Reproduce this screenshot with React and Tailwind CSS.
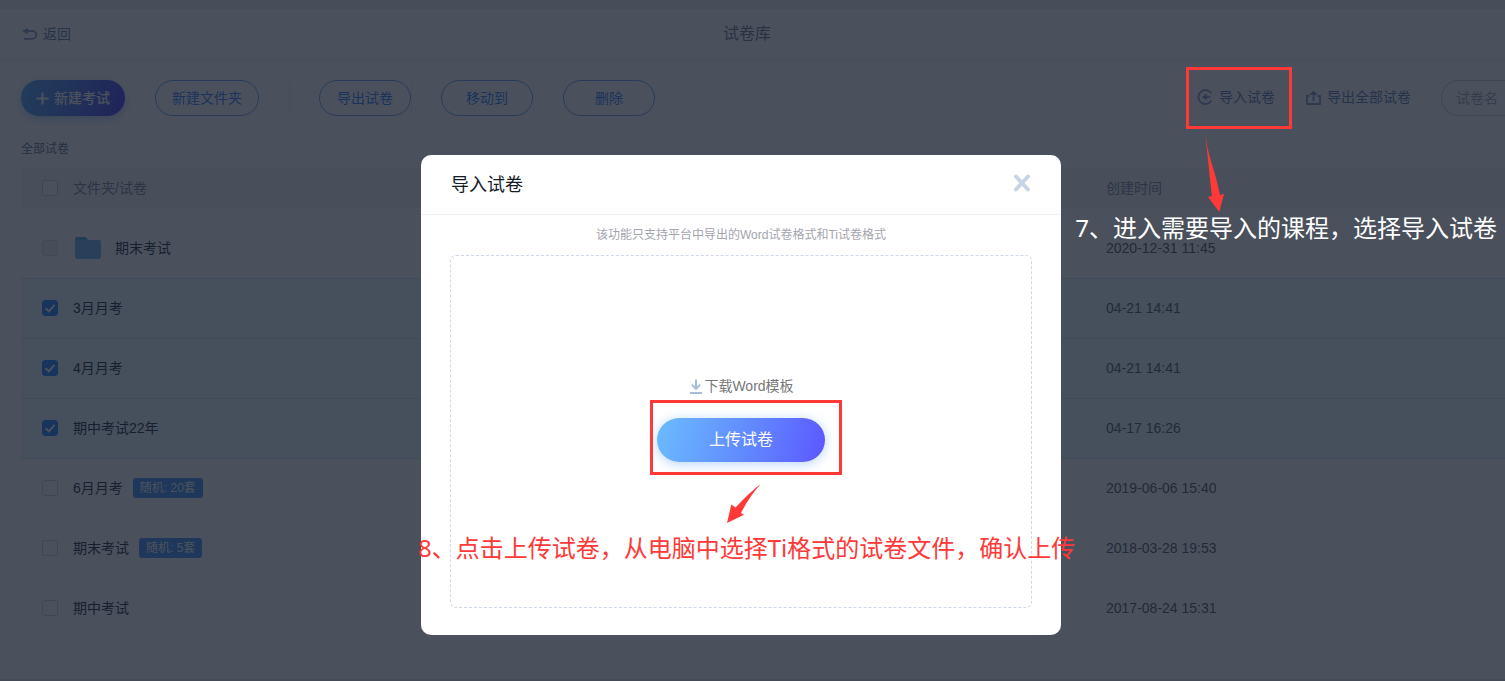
import { useState } from 'react';

const initialPapers = [
  { id: 1, name: '期末考试', time: '2020-12-31 11:45', folder: true },
  { id: 2, name: '3月月考', time: '04-21 14:41', checked: true },
  { id: 3, name: '4月月考', time: '04-21 14:41', checked: true },
  { id: 4, name: '期中考试22年', time: '04-17 16:26', checked: true },
  { id: 5, name: '6月月考', time: '2019-06-06 15:40', tag: '随机: 20套' },
  { id: 6, name: '期末考试', time: '2018-03-28 19:53', tag: '随机: 5套' },
  { id: 7, name: '期中考试', time: '2017-08-24 15:31' },
];

function Checkbox({ checked, disabled, onChange, label }) {
  return (
    <span className="grid size-4 shrink-0">
      <input
        type="checkbox"
        aria-label={label}
        checked={checked}
        disabled={disabled}
        onChange={onChange}
        className="col-start-1 row-start-1 size-4 appearance-none rounded-[3px] border border-[#c4d4e0] bg-white checked:border-[#3a8bff] checked:bg-[#3a8bff] disabled:border-[#dcdfe8] disabled:bg-[#eeeff4]"
      />
      {checked && (
        <svg viewBox="0 0 16 16" className="pointer-events-none col-start-1 row-start-1 size-4" fill="none" stroke="#fff" strokeWidth="2">
          <path d="M3.5 8.3 L6.8 11.3 L12.5 4.8" />
        </svg>
      )}
    </span>
  );
}

function FolderIcon() {
  return (
    <svg viewBox="0 0 26 22" className="h-[22px] w-[26px]">
      <path d="M0 2a2 2 0 0 1 2-2h9l2.5 4H0z" fill="#5aaee8" />
      <path d="M0 3h24a2 2 0 0 1 2 2v15a2 2 0 0 1-2 2H2a2 2 0 0 1-2-2z" fill="#73bdf8" />
    </svg>
  );
}

function OutlineButton({ children, className }) {
  return (
    <button type="button" className={`h-9 rounded-full border border-[#6ba6f8] text-sm text-[#3a88f8] ${className}`}>
      {children}
    </button>
  );
}

function Divider() {
  return <span className="h-[30px] w-px bg-[#e9edf3]" />;
}

function Toolbar() {
  return (
    <div className="mt-5 flex h-9 items-center pl-[21px]">
      <button
        type="button"
        className="flex h-9 w-[104px] items-center justify-center gap-[5px] rounded-full bg-linear-105 from-[#5eaef5] to-[#5546f0] text-sm font-medium text-white shadow-[0_3px_10px_rgba(58,139,255,0.4)]"
      >
        <svg viewBox="0 0 13 13" className="size-[13px]" stroke="#fff" strokeWidth="2">
          <path d="M6.5 0.5v12M0.5 6.5h12" />
        </svg>
        新建考试
      </button>
      <OutlineButton className="ml-[30px] w-[104px]">新建文件夹</OutlineButton>
      <div className="ml-[30px] flex items-center gap-[29px]">
        <Divider />
        <OutlineButton className="w-[92px]">导出试卷</OutlineButton>
      </div>
      <div className="flex items-center gap-[29px]">
        <Divider />
        <OutlineButton className="w-[92px]">移动到</OutlineButton>
      </div>
      <div className="flex items-center gap-[29px]">
        <Divider />
        <OutlineButton className="w-[92px]">删除</OutlineButton>
      </div>

      <div className="ml-auto flex items-center gap-[30px] text-sm text-[#6386bd]">
        <div className="relative">
          <button type="button" className="flex h-9 items-center gap-[6px] pr-px pb-0.5">
            <svg viewBox="0 0 16 16" className="size-4" fill="none" stroke="#86a1cc" strokeWidth="1.8">
              <path d="M14.4 4.4a7 7 0 1 0 0 7.2" />
              <path d="M13.5 8H8" />
              <path d="M9.8 4.4 4.8 8l5 3.6z" fill="#86a1cc" stroke="none" />
            </svg>
            导入试卷
          </button>
          <ImportStep />
        </div>
        <button type="button" className="flex h-9 items-center gap-[6px] pb-0.5">
          <svg viewBox="0 0 15 15" className="size-[15px]" fill="none" stroke="#86a1cc" strokeWidth="1.8">
            <path d="M3.4 6H1v8h13V6h-2.4" />
            <path d="M7.5 11V4" />
            <path d="M3 5 7.5 0.5 12 5z" fill="#86a1cc" stroke="none" />
          </svg>
          导出全部试卷
        </button>
        <input
          type="text"
          aria-label="试卷名"
          placeholder="试卷名"
          className="h-9 w-16 rounded-l-full border border-r-0 border-[#c9d2e2] pl-[14px] text-sm placeholder:text-[#a6afc0]"
        />
      </div>
    </div>
  );
}

function PaperTable() {
  const [papers, setPapers] = useState(initialPapers);

  const toggle = (id) => {
    setPapers(papers.map((p) => (p.id === id ? { ...p, checked: !p.checked } : p)));
  };

  const toggleAll = (e) => {
    setPapers(papers.map((p) => (p.folder ? p : { ...p, checked: e.target.checked })));
  };

  const allChecked = papers.every((p) => p.folder || p.checked);

  return (
    <div className="pl-[21px]">
      <table className="w-full table-fixed border-collapse text-left text-sm text-[#2c3850]">
        <thead>
          <tr className="h-10 bg-[#f3f5f9] text-[#8490a6]">
            <th className="p-0 font-normal">
              <div className="flex items-center gap-[15px] pl-[21px]">
                <Checkbox label="全选" checked={allChecked} onChange={toggleAll} />
                文件夹/试卷
              </div>
            </th>
            <th className="w-[399px] p-0 font-normal">创建时间</th>
          </tr>
        </thead>
        <tbody>
          {papers.map((paper) => (
            <tr
              key={paper.id}
              className={
                paper.folder
                  ? 'h-[70px]'
                  : paper.checked
                    ? 'h-[60px] border-y border-[#cfe6fb] bg-[#ebf9ff]'
                    : 'h-[60px]'
              }
            >
              <td className={paper.folder ? 'p-0 pt-[10px]' : 'p-0'}>
                <label className="flex items-center gap-[15px] pl-[21px]">
                  <Checkbox
                    label={paper.name}
                    checked={!!paper.checked}
                    disabled={paper.folder}
                    onChange={() => toggle(paper.id)}
                  />
                  {paper.folder ? (
                    <span className="flex items-center gap-[14px] pl-0.5">
                      <FolderIcon />
                      {paper.name}
                    </span>
                  ) : (
                    <span className="flex items-center gap-[10px]">
                      {paper.name}
                      {paper.tag && (
                        <span className="flex h-5 items-center rounded-[3px] bg-[#4d97fa] px-[7px] text-xs text-white">
                          {paper.tag}
                        </span>
                      )}
                    </span>
                  )}
                </label>
              </td>
              <td className={paper.folder ? 'p-0 pt-[10px] text-[#5a6475]' : 'p-0 text-[#5a6475]'}>{paper.time}</td>
            </tr>
          ))}
        </tbody>
      </table>
    </div>
  );
}

// Guide marks sit above the mask, anchored to the control they explain
function ImportStep() {
  return (
    <div className="pointer-events-none absolute -top-[13px] -left-[11px] z-20 text-[#ff3838]">
      <div className="h-[62px] w-[106px] border-3 border-[#ff3838]" />
      <svg viewBox="0 0 22 78" className="absolute top-[67px] left-[18px] h-[78px] w-[22px]" fill="currentColor">
        <path d="M1.3 0 L7.8 62 L4 63 L15.3 78 L20 60 L16 61 Q12 42 7.5 29 Q3 15 1.3 0Z" />
      </svg>
      <p className="absolute top-[143px] right-[-205px] font-['Noto_Sans','Noto_Sans_CJK_SC',sans-serif] text-2xl/9 whitespace-nowrap text-white">
        7、进入需要导入的课程，选择导入试卷
      </p>
    </div>
  );
}

function UploadStep() {
  return (
    <div className="pointer-events-none absolute -top-[18px] -left-[7px] text-[#ff3838]">
      <div className="h-[75px] w-[192px] border-3 border-[#ff3838]" />
      <svg viewBox="0 0 34 39" className="absolute top-[84px] left-[77px] h-[39px] w-[34px]" fill="currentColor">
        <path d="M33.7 0 Q23 8 8.5 23.5 L4.3 20.5 L0 39 L17 30.8 L14 29 Q22 13 33.7 0Z" />
      </svg>
      <p className="absolute top-[130px] left-[-232px] font-['Noto_Sans','Noto_Sans_CJK_SC',sans-serif] text-2xl/9 whitespace-nowrap">
        8、点击上传试卷，从电脑中选择Ti格式的试卷文件，确认上传
      </p>
    </div>
  );
}

function ImportDialog() {
  return (
    <div role="dialog" aria-labelledby="import-title" className="h-[480px] w-[640px] rounded-[10px] bg-white">
      <div className="flex h-[60px] items-center justify-between border-b border-[#f1f2f4] px-[30px]">
        <h2 id="import-title" className="text-lg text-[#141b26]">导入试卷</h2>
        <button type="button" aria-label="关闭" className="pb-1">
          <svg viewBox="0 0 18 18" className="size-[18px]" stroke="#c8d4e6" strokeWidth="4" strokeLinecap="round">
            <path d="M3 2.5l12 13M15 2.5L3 15.5" />
          </svg>
        </button>
      </div>
      <p className="mt-[10px] text-center text-xs/5 text-[#a3a4ae]">该功能只支持平台中导出的Word试卷格式和Ti试卷格式</p>
      <div className="mx-[29px] mt-[10px] flex h-[353px] flex-col items-center rounded-md border border-dashed border-[#cfd8e8] pt-[120px]">
        <a href="#template" className="flex items-center text-sm text-[#777]">
          <svg viewBox="0 0 16 16" className="size-4" fill="none" stroke="#a9bddb" strokeWidth="2">
            <path d="M8 1.5v9M3.8 6.6 8 10.8l4.2-4.2M2 15h12" />
          </svg>
          下载Word模板
        </a>
        <div className="relative mt-[22px]">
          <button
            type="button"
            className="h-11 w-[168px] rounded-full bg-linear-105 from-[#6bbcff] to-[#5c55ff] text-base text-white shadow-[0_2px_12px_rgba(80,150,255,0.4)]"
          >
            上传试卷
          </button>
          <UploadStep />
        </div>
      </div>
    </div>
  );
}

export default function App() {
  return (
    <div className="relative flex min-h-screen flex-col overflow-hidden bg-white font-['Liberation_Sans','Noto_Sans_CJK_SC',sans-serif]">
      <div className="h-[9px] bg-[#eff0f3]" />
      <header className="grid h-[51px] grid-cols-3 items-center border-b border-[#eceff4] pr-[33px] pl-[22px]">
        <a href="#back" className="flex items-center gap-[6px] text-sm text-[#6984b0]">
          <svg viewBox="0 0 15 12" className="h-3 w-[15px]" fill="none" stroke="#8ca3c9" strokeWidth="1.8">
            <path d="M4 3h6.3a3.9 3.9 0 0 1 0 7.8H2" />
            <path d="M6 0v6L0 3z" fill="#8ca3c9" stroke="none" />
          </svg>
          返回
        </a>
        <h1 className="text-center text-base text-[#79839a]">试卷库</h1>
      </header>

      <Toolbar />

      <p className="mt-[23px] mb-[9px] pl-[21px] text-xs/5 text-[#667b9c]">全部试卷</p>
      <PaperTable />
      <div className="mt-auto h-0.5 bg-[#e3e6eb]" />

      <div className="absolute inset-0 z-10 flex justify-center bg-[#0f1725]/75 pt-[155px] pr-[23px]">
        <ImportDialog />
      </div>
    </div>
  );
}
